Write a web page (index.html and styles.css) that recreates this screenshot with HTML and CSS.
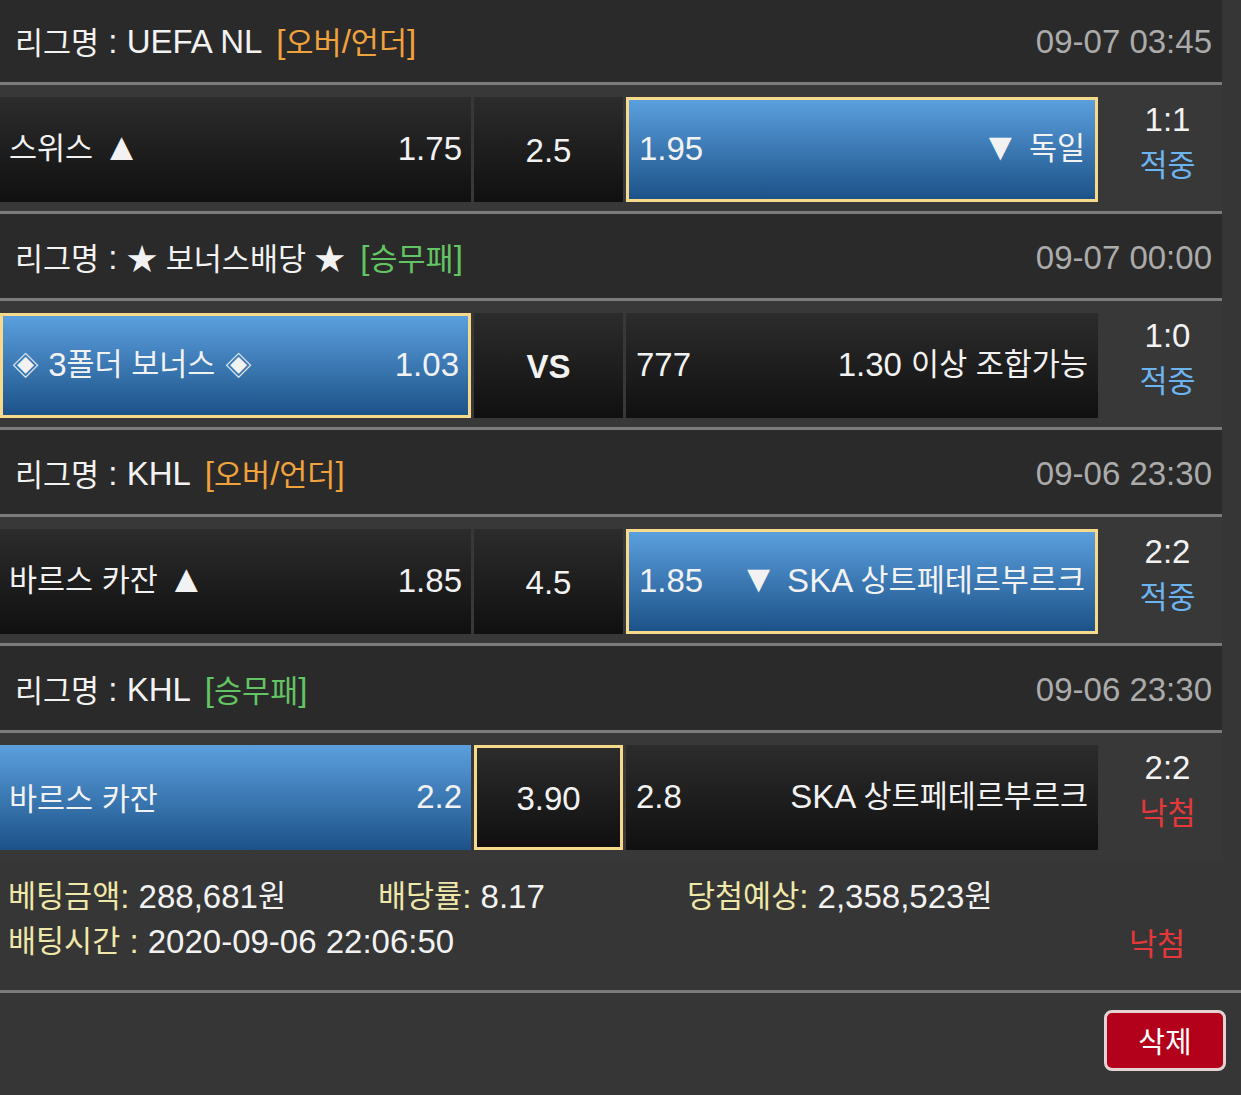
FILE: index.html
```html
<!DOCTYPE html>
<html lang="ko">
<head>
<meta charset="utf-8">
<title>베팅내역</title>
<link rel="stylesheet" href="styles.css">
</head>
<body>
<div class="list">
  <div class="game">
    <div class="league">
      <div class="name"><span class="ko">리그명</span> : UEFA NL <span class="type ou">[<span class="ko">오버</span>/<span class="ko">언더</span>]</span></div>
      <div class="time">09-07 03:45</div>
    </div>
    <div class="match">
      <div class="cell"><span><span class="ko">스위스</span> <span class="tri">▲</span></span><span>1.75</span></div>
      <div class="cell mid">2.5</div>
      <div class="cell blue sel"><span>1.95</span><span><span class="tri">▼</span> <span class="ko">독일</span></span></div>
      <div class="result">1:1<br><span class="ko hit">적중</span></div>
    </div>
  </div>
  <div class="game">
    <div class="league">
      <div class="name"><span class="ko">리그명</span> : <span class="ko">★ 보너스배당 ★</span> <span class="type wdl">[<span class="ko">승무패</span>]</span></div>
      <div class="time">09-07 00:00</div>
    </div>
    <div class="match">
      <div class="cell blue sel"><span><span class="sym">◈</span> 3<span class="ko">폴더 보너스</span> <span class="sym">◈</span></span><span>1.03</span></div>
      <div class="cell mid vs">VS</div>
      <div class="cell"><span>777</span><span>1.30 <span class="ko">이상 조합가능</span></span></div>
      <div class="result">1:0<br><span class="ko hit">적중</span></div>
    </div>
  </div>
  <div class="game">
    <div class="league">
      <div class="name"><span class="ko">리그명</span> : KHL <span class="type ou">[<span class="ko">오버</span>/<span class="ko">언더</span>]</span></div>
      <div class="time">09-06 23:30</div>
    </div>
    <div class="match">
      <div class="cell"><span><span class="ko">바르스 카잔</span> <span class="tri">▲</span></span><span>1.85</span></div>
      <div class="cell mid">4.5</div>
      <div class="cell blue sel"><span>1.85</span><span><span class="tri">▼</span> SKA <span class="ko">상트페테르부르크</span></span></div>
      <div class="result">2:2<br><span class="ko hit">적중</span></div>
    </div>
  </div>
  <div class="game last">
    <div class="league">
      <div class="name"><span class="ko">리그명</span> : KHL <span class="type wdl">[<span class="ko">승무패</span>]</span></div>
      <div class="time">09-06 23:30</div>
    </div>
    <div class="match">
      <div class="cell blue"><span class="ko">바르스 카잔</span><span>2.2</span></div>
      <div class="cell mid sel">3.90</div>
      <div class="cell"><span>2.8</span><span>SKA <span class="ko">상트페테르부르크</span></span></div>
      <div class="result">2:2<br><span class="ko miss">낙첨</span></div>
    </div>
  </div>
</div>
<div class="info">
  <div class="info-row">
    <div><span class="label"><span class="ko">베팅금액</span>:</span> 288,681<span class="ko">원</span></div>
    <div><span class="label"><span class="ko">배당률</span>:</span> 8.17</div>
    <div><span class="label"><span class="ko">당첨예상</span>:</span> 2,358,523<span class="ko">원</span></div>
  </div>
  <div class="info-row2">
    <div><span class="label"><span class="ko">배팅시간</span> :</span> 2020-09-06 22:06:50</div>
    <div class="status"><span class="ko miss">낙첨</span></div>
  </div>
</div>
<div class="actions">
  <button class="del" type="button">삭제</button>
</div>
</body>
</html>
```
FILE: styles.css
```css
* { box-sizing: border-box; }
html, body { margin: 0; padding: 0; }
body {
  background: #363636;
  font-family: "Liberation Sans", "Noto Sans CJK KR", sans-serif;
  font-size: 33px;
  color: #f2f2f2;
  width: 1241px;
  height: 1095px;
  overflow: hidden;
}
.ko {
  font-family: "Noto Sans CJK KR", "Liberation Sans", sans-serif;
  font-size: 30.5px;
  line-height: 1;
  vertical-align: 1px;
}
.league .ko { vertical-align: -1px; }
.tri {
  font-size: 39px;
  line-height: 0.8;
}
.sym {
  font-size: 27px;
  line-height: 1;
  vertical-align: 1px;
}
.list {
  width: 1222px;
  margin-top: -2px;
  background: #383838;
}
.league {
  height: 87px;
  background: #2a2a2a;
  border-bottom: 3px solid #7b7b7b;
  display: flex;
  align-items: center;
  justify-content: space-between;
  padding: 4px 10px 0 15px;
  white-space: nowrap;
}
.type { margin-left: 6px; }
.ou { color: #f0a23c; }
.wdl { color: #62c462; }
.time { color: #ababab; }
.match {
  display: grid;
  grid-template-columns: 471px 149px 472px 1fr;
  column-gap: 3px;
  grid-template-rows: 105px;
  padding: 12px 0 9px;
  border-bottom: 3px solid #7b7b7b;
  background: #383838;
}
.game.last .match { border-bottom: 0; }
.cell {
  display: flex;
  align-items: center;
  justify-content: space-between;
  padding: 0 9px 1px 9px;
  background: linear-gradient(#2c2c2c, #101010);
  white-space: nowrap;
}
.cell + .cell + .cell { padding: 0 10px 1px; }
.mid { justify-content: center; padding-top: 4px; }
.vs { font-weight: bold; }
.blue { background: linear-gradient(#5b9fde, #1c5288); }
.sel { border: 3px solid #f7d98b; }
.result {
  padding-left: 12px;
  text-align: center;
  line-height: 45px;
}
.result .ko { vertical-align: 0; }
.hit { color: #6cb4ee; }
.miss { color: #e5383a; }
.info {
  width: 1241px;
  background: #363636;
  padding: 15px 8px 26px;
  border-bottom: 3px solid #7b7b7b;
  line-height: 45px;
}
.info-row {
  display: grid;
  grid-template-columns: 370px 309px auto;
}
.info-row2 {
  display: flex;
  justify-content: space-between;
  padding-right: 48px;
}
.status .ko { vertical-align: -2px; }
.label { color: #f0e8a8; }
.actions {
  display: flex;
  justify-content: flex-end;
  padding: 17px 15px 0;
}
.del {
  width: 122px;
  height: 61px;
  background: #b3001b;
  border: 3px solid #e4d4d4;
  border-radius: 8px;
  color: #fff;
  font-family: "Noto Sans CJK KR", "Liberation Sans", sans-serif;
  font-size: 29px;
  padding: 0 0 2px;
}
```
